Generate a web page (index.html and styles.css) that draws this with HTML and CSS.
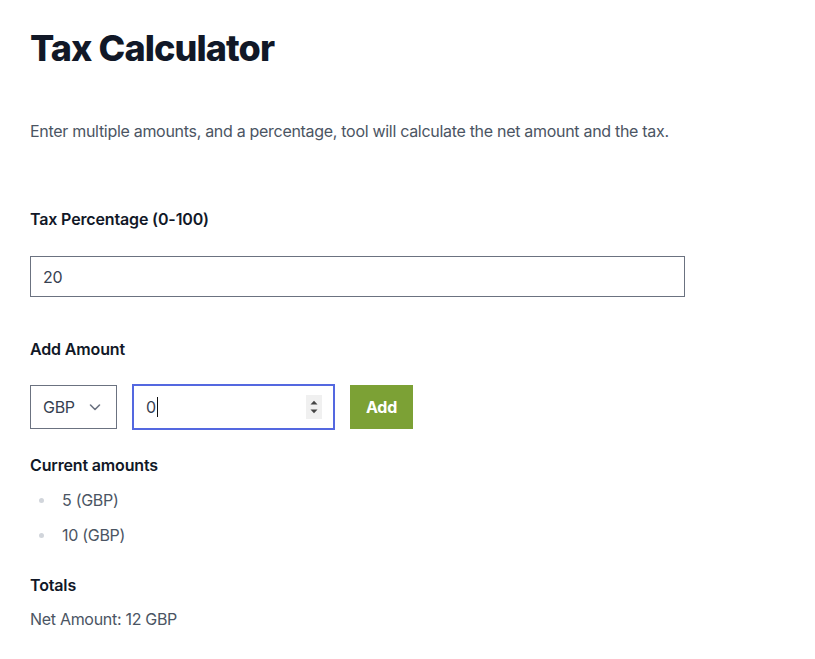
FILE: index.html
```html
<!DOCTYPE html>
<html lang="en">
<head>
<meta charset="utf-8">
<title>Tax Calculator</title>
<link rel="stylesheet" href="styles.css">
</head>
<body>
<main class="page">
  <h1 class="title">Tax Calculator</h1>
  <p class="intro">Enter multiple amounts, and a percentage, tool will calculate the net amount and the tax.</p>

  <label class="label label-tax">Tax Percentage (0-100)</label>
  <div class="text-input">20</div>

  <label class="label label-add">Add Amount</label>
  <div class="add-row">
    <div class="select">
      <span>GBP</span>
      <svg class="chevron" width="14" height="14" viewBox="0 0 14 14"><path d="M2.5 5 L7 9.5 L11.5 5" fill="none" stroke="#6b7280" stroke-width="1.6" stroke-linecap="round" stroke-linejoin="round"/></svg>
    </div>
    <div class="number-input">
      <span class="value">0</span><span class="caret"></span>
      <span class="spinner">
        <svg width="16" height="24" viewBox="0 0 16 24"><path d="M4.5 9.5 L8 5.8 L11.5 9.5 Z" fill="#444"/><path d="M4.5 14.5 L8 18.2 L11.5 14.5 Z" fill="#444"/></svg>
      </span>
    </div>
    <button class="add-btn" type="button">Add</button>
  </div>

  <h3 class="label label-current">Current amounts</h3>
  <ul class="amounts">
    <li>5 (GBP)</li>
    <li>10 (GBP)</li>
  </ul>

  <h3 class="label label-totals">Totals</h3>
  <p class="net">Net Amount: 12 GBP</p>
</main>
</body>
</html>
```
FILE: styles.css
```css
* { box-sizing: border-box; }
html, body { margin: 0; padding: 0; background: #ffffff; }
body {
  font-family: Inter, "Noto Sans", sans-serif;
  font-size: 16px;
  line-height: 24px;
  color: #4b5563;
  letter-spacing: -0.3px;
}
.page { padding: 28px 30px 0 30px; }
.title {
  margin: 0;
  font-size: 36px;
  line-height: 40px;
  font-weight: 800;
  color: #111827;
  letter-spacing: -0.9px;
}
.intro { margin: 51px 0 0 0; color: #4b5563; }
.label {
  display: block;
  margin: 0;
  font-size: 16px;
  line-height: 24px;
  font-weight: 600;
  color: #111827;
  letter-spacing: -0.15px;
}
.label-tax { margin-top: 64px; }
.text-input {
  margin-top: 25px;
  width: 655px;
  height: 41px;
  border: 1px solid #6b7280;
  padding: 0 12px;
  display: flex;
  align-items: center;
  color: #374151;
}
.label-add { margin-top: 40px; }
.add-row {
  margin-top: 23px;
  display: flex;
  align-items: center;
  gap: 15px;
}
.select {
  width: 87px;
  height: 44px;
  border: 1px solid #6b7280;
  padding: 0 12px;
  display: flex;
  align-items: center;
  justify-content: space-between;
  color: #374151;
}
.chevron { margin-right: 2px; }
.number-input {
  width: 203px;
  height: 46px;
  border: 2px solid #5468e0;
  padding: 0 11px 0 12px;
  display: flex;
  align-items: center;
  color: #374151;
}
.caret { width: 1px; height: 20px; background: #111; margin-left: 1px; }
.spinner {
  margin-left: auto;
  width: 16px;
  height: 24px;
  background: #f0f0f0;
  display: flex;
}
.add-btn {
  width: 63px;
  height: 44px;
  border: 0;
  padding: 0;
  background: #7ca135;
  color: #ffffff;
  font-family: inherit;
  font-size: 16px;
  font-weight: 700;
  letter-spacing: -0.2px;
}
.label-current { margin-top: 23px; }
.amounts {
  list-style: none;
  margin: 11px 0 0 0;
  padding: 0;
}
.amounts li {
  position: relative;
  padding-left: 32px;
  color: #4b5563;
}
.amounts li + li { margin-top: 11px; }
.amounts li::before {
  content: "";
  position: absolute;
  left: 9px;
  top: 10px;
  width: 5px;
  height: 5px;
  border-radius: 50%;
  background: #d1d5db;
}
.label-totals { margin-top: 26px; }
.net { margin: 10px 0 0 0; color: #4b5563; }
```
